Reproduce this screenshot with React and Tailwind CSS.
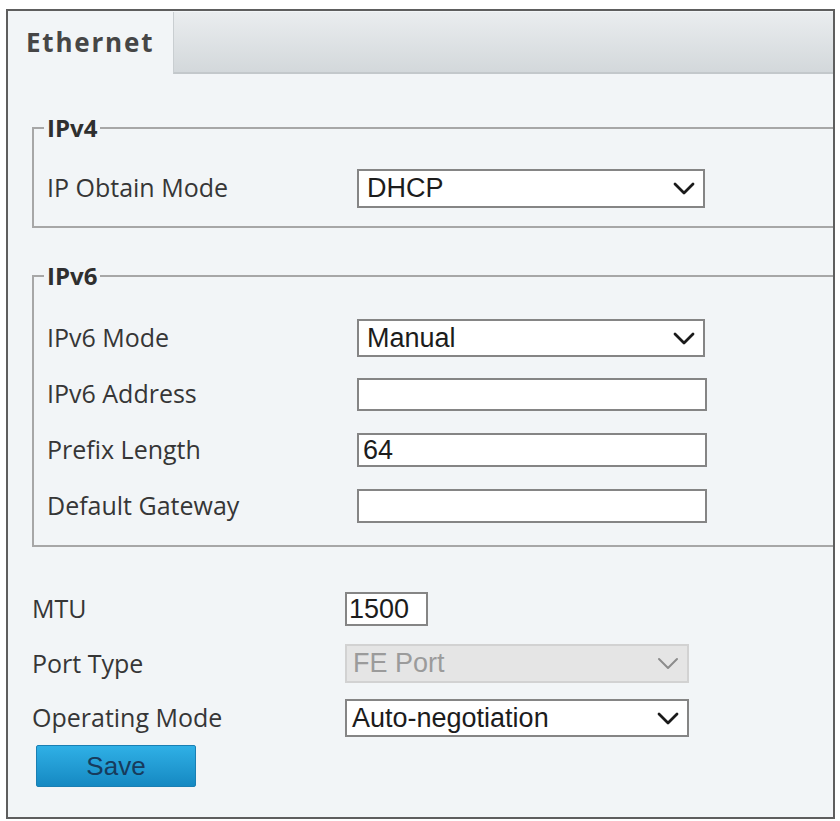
import React from "react";

const labelFont = "font-['Open_Sans','Noto_Sans',sans-serif]";
const inputFont = "font-['Liberation_Sans',Arial,sans-serif]";

function Chevron({ muted }) {
  return (
    <svg width="22" height="13" viewBox="0 0 22 13" className="shrink-0">
      <polyline
        points="2,2 11,11 20,2"
        fill="none"
        stroke={muted ? "#8c8c8c" : "#1a1a1a"}
        strokeWidth={muted ? 2 : 2.8}
        strokeLinecap="round"
        strokeLinejoin="round"
      />
    </svg>
  );
}

function Select({ value, width, height, disabled, pad = 8 }) {
  return (
    <div
      className={`flex items-center justify-between border-2 pr-[8px] text-[27px] ${inputFont} ${
        disabled
          ? "bg-[#e5e5e5] border-[#d2d2d2] text-[#9b9b9b]"
          : "bg-white border-[#858585] text-[#1c1c1c]"
      }`}
      style={{ width, height, paddingLeft: pad }}
    >
      <span className="leading-none">{value}</span>
      <Chevron muted={disabled} />
    </div>
  );
}

function TextBox({ value, width, height, pad }) {
  return (
    <div
      className={`flex items-center bg-white border-2 border-[#858585] text-[27px] text-[#1c1c1c] ${inputFont}`}
      style={{ width, height, paddingLeft: pad }}
    >
      <span className="leading-none">{value}</span>
    </div>
  );
}

function Row({ label, labelWidth, height = 56, children }) {
  return (
    <div className="flex items-center" style={{ height }}>
      <div
        className={`text-[25px] text-[#363636] ${labelFont}`}
        style={{ width: labelWidth }}
      >
        {label}
      </div>
      {children}
    </div>
  );
}

function Group({ title, children, className }) {
  return (
    <fieldset
      className={`border-2 border-r-0 border-[#a7a7a7] pl-[10px] ${className}`}
    >
      <legend
        className={`px-[3px] text-[24px] leading-[32px] font-bold text-[#2f2f2f] ${labelFont}`}
      >
        {title}
      </legend>
      <div className="pl-[3px]">{children}</div>
    </fieldset>
  );
}

export default function App() {
  return (
    <div className="w-[840px] h-[821px] bg-white pt-[9px] pl-[6px]">
      <div className="w-[829px] h-[810px] border-2 border-[#5e5e5e] bg-[#f2f5f7] flex flex-col">
        {/* tab strip */}
        <div className="flex h-[63px]">
          <div className="w-[165px] flex items-center pl-[18px]">
            <span
              className={`text-[26px] font-bold tracking-[1.8px] text-[#464646] ${labelFont}`}
            >
              Ethernet
            </span>
          </div>
          <div className="flex-1 mt-[1px] border-l border-b-2 border-l-[#c9ced1] border-b-[#c3c8cb] bg-gradient-to-b from-[#eaedef] to-[#d3d8db]"></div>
        </div>

        <div className="pl-[24px]">
          <Group title="IPv4" className="mt-[38px] pt-[16px] pb-[10px]">
            <Row label="IP Obtain Mode" labelWidth={310}>
              <Select value="DHCP" width={348} height={39} />
            </Row>
          </Group>

          <Group title="IPv6" className="mt-[32px] pt-[18px] pb-[11px]">
            <Row label="IPv6 Mode" labelWidth={310}>
              <Select value="Manual" width={348} height={38} />
            </Row>
            <Row label="IPv6 Address" labelWidth={310}>
              <TextBox value="" width={350} height={33} pad={6} />
            </Row>
            <Row label="Prefix Length" labelWidth={310}>
              <TextBox value="64" width={350} height={34} pad={4} />
            </Row>
            <Row label="Default Gateway" labelWidth={310}>
              <TextBox value="" width={350} height={34} pad={6} />
            </Row>
          </Group>

          <div className="mt-[35px]">
            <Row label="MTU" labelWidth={313} height={54}>
              <TextBox value="1500" width={83} height={34} pad={2} />
            </Row>
            <Row label="Port Type" labelWidth={313} height={55}>
              <Select value="FE Port" width={344} height={39} disabled pad={6} />
            </Row>
            <Row label="Operating Mode" labelWidth={313} height={54}>
              <Select value="Auto-negotiation" width={344} height={38} pad={5} />
            </Row>
            <button
              className={`ml-[4px] w-[160px] h-[42px] rounded-[2px] border border-[#1a7fb3] bg-gradient-to-b from-[#2fb0e6] to-[#1589c2] text-[26px] text-[#173b5c] ${inputFont}`}
            >
              Save
            </button>
          </div>
        </div>
      </div>
    </div>
  );
}
